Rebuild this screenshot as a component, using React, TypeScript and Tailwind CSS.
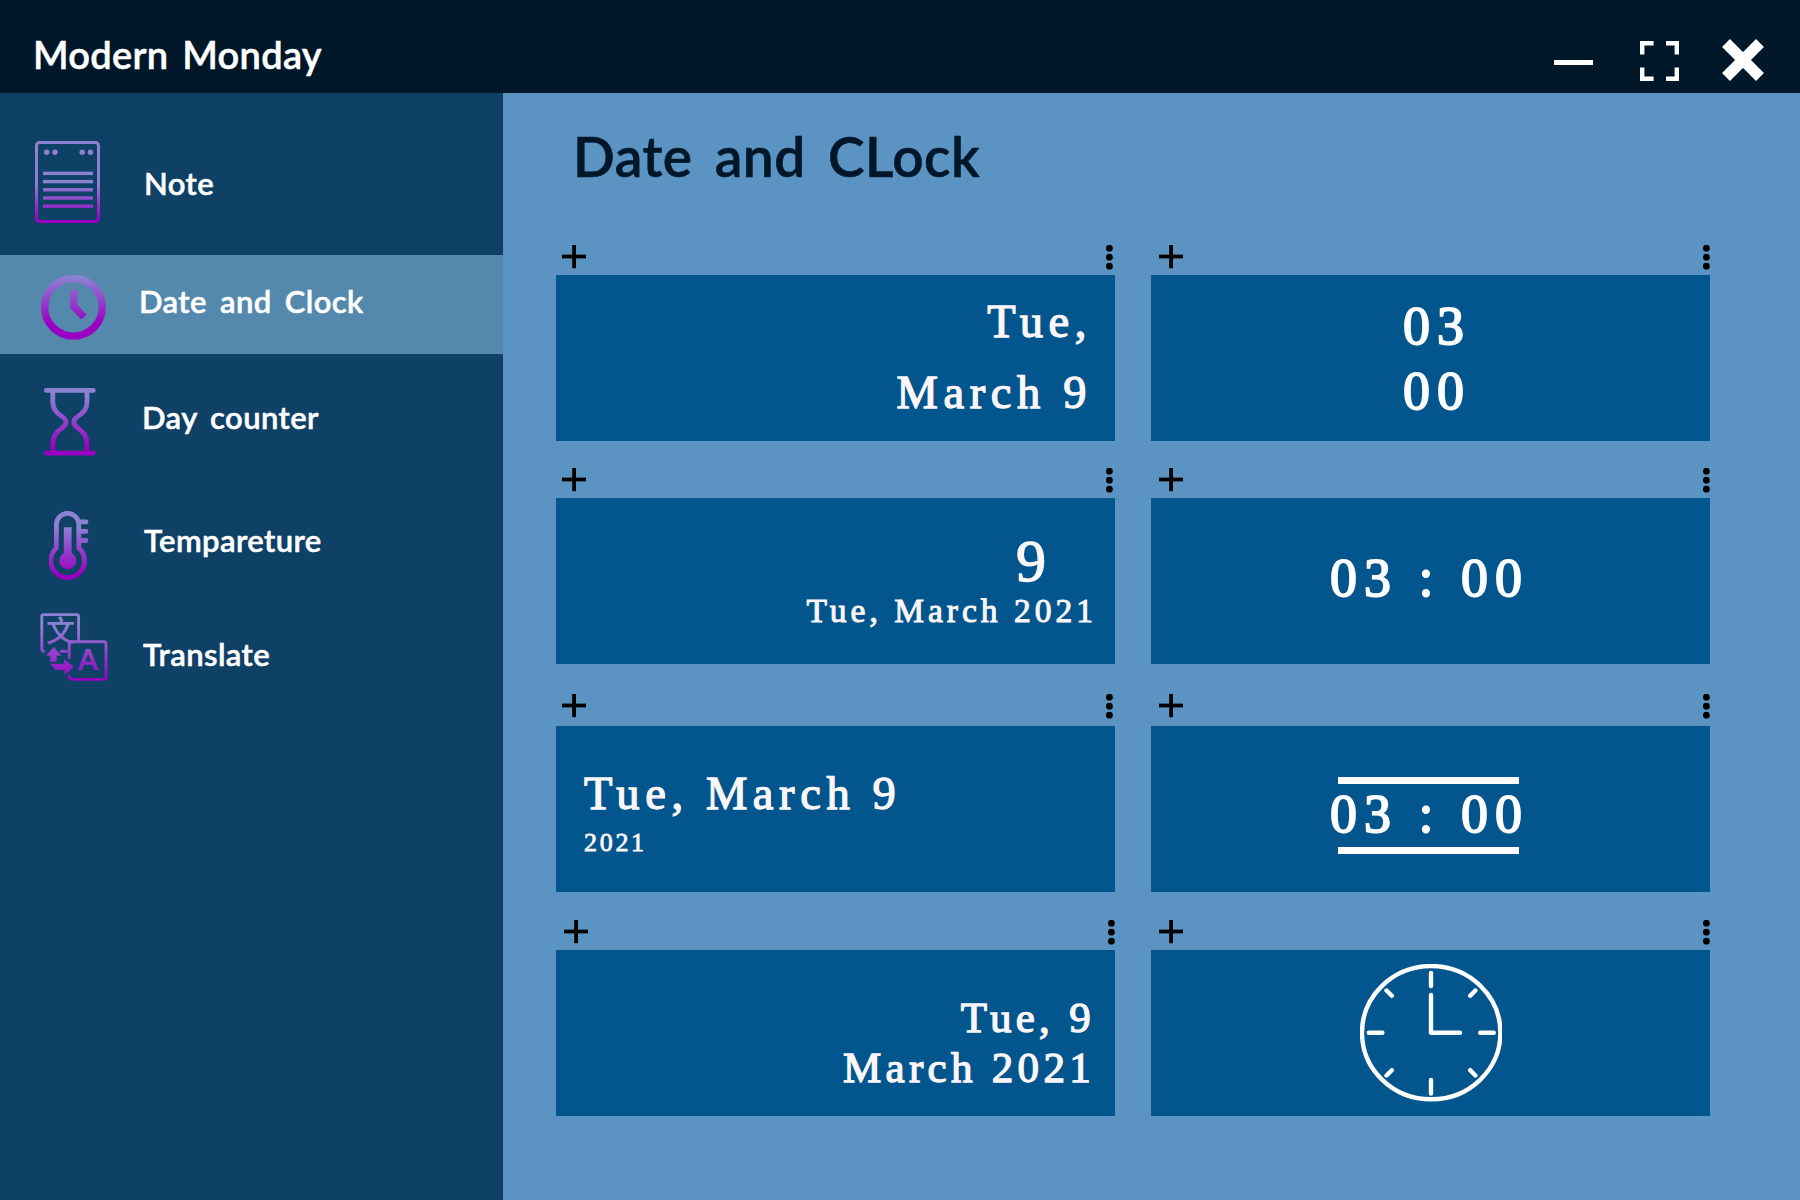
import React from 'react';

type FadeProps = { id: string; y2: number; from: string; to: string };

function Fade({ id, y2, from, to }: FadeProps) {
  return (
    <defs>
      <linearGradient id={id} gradientUnits="userSpaceOnUse" x1="0" y1="0" x2="0" y2={y2}>
        <stop offset={from} stopColor="#8c82d2" />
        <stop offset={to} stopColor="#9a00c2" />
      </linearGradient>
    </defs>
  );
}

function NoteIcon() {
  return (
    <svg width="65" height="82" viewBox="0 0 65 82" fill="none">
      <Fade id="note" y2={82} from="52%" to="96%" />
      <rect x="1.5" y="1.5" width="62" height="79" rx="3" stroke="url(#note)" strokeWidth="3" />
      <g fill="url(#note)">
        <circle cx="11.7" cy="11.2" r="2.7" />
        <circle cx="20" cy="11.2" r="2.7" />
        <circle cx="47.2" cy="11.2" r="2.7" />
        <circle cx="55.4" cy="11.2" r="2.7" />
        <rect x="8" y="30.7" width="50" height="3.4" />
        <rect x="8" y="38.9" width="50" height="3.4" />
        <rect x="8" y="47.1" width="50" height="3.4" />
        <rect x="8" y="55.3" width="50" height="3.4" />
        <rect x="8" y="63.5" width="50" height="3.4" />
      </g>
    </svg>
  );
}

function ClockIcon() {
  return (
    <svg width="65" height="65" viewBox="0 0 65 65" fill="none">
      <Fade id="clock" y2={65} from="4%" to="75%" />
      <circle cx="32.5" cy="32.3" r="28.8" stroke="url(#clock)" strokeWidth="7.4" />
      <path d="M32.8 15V31.5L43 42" stroke="url(#clock)" strokeWidth="7.4" />
    </svg>
  );
}

function HourglassIcon() {
  return (
    <svg width="52" height="68" viewBox="0 0 52 68" fill="none">
      <Fade id="hour" y2={68} from="12%" to="88%" />
      <g stroke="url(#hour)" strokeWidth="4.8">
        <path d="M8.8 4V14C8.8 21 13 25.5 18 28.5Q22 31 22 34Q22 37 18 40C13 43.5 8.8 48 8.8 55V64" />
        <path d="M43 4V14C43 21 38.8 25.5 33.8 28.5Q29.8 31 29.8 34Q29.8 37 33.8 40C38.8 43.5 43 48 43 55V64" />
      </g>
      <rect x="0" y="0" width="51.6" height="4.8" rx="2" fill="url(#hour)" />
      <rect x="0" y="62.8" width="51.6" height="4.8" rx="2" fill="url(#hour)" />
    </svg>
  );
}

function ThermometerIcon() {
  return (
    <svg width="40" height="69" viewBox="0 0 40 69" fill="none">
      <Fade id="thermo" y2={69} from="22%" to="92%" />
      <path
        d="M7.4 37V13.5A11.2 11.2 0 0 1 29.8 13.5V37A16.9 16.9 0 1 1 7.4 37Z"
        stroke="url(#thermo)"
        strokeWidth="4.8"
      />
      <path d="M14.8 16.3H22.6V42.2A8.5 8.5 0 1 1 14.8 42.2Z" fill="url(#thermo)" />
      <g fill="url(#thermo)">
        <rect x="30" y="8.4" width="9.2" height="4.8" rx="1.8" />
        <rect x="30" y="17.9" width="9.2" height="4.8" rx="1.8" />
        <rect x="30" y="27.1" width="9.2" height="4.8" rx="1.8" />
      </g>
    </svg>
  );
}

function TranslateIcon() {
  return (
    <svg className="overflow-visible" width="68" height="69" viewBox="0 0 68 69" fill="none">
      <Fade id="trans" y2={69} from="20%" to="96%" />
      <g stroke="url(#trans)" strokeWidth="2.9" strokeLinejoin="round">
        <path d="M38.6 27.5V3.4Q38.6 1.6 36.8 1.6H3.6Q1.8 1.6 1.8 3.4V36.2Q1.8 38.3 4.8 38.3" />
        <path d="M20 38.3H27.5" />
        <path d="M29.2 46V31Q29.2 28.8 31.4 28.8H63.8Q66 28.8 66 31V64.2Q66 66.4 63.8 66.4H32Q29.4 66.4 29.2 62" />
      </g>
      <g fill="url(#trans)">
        <path d="M13.7 34L21.4 42.7H16.7V48.7H10.3V42.7H6Z" />
        <path d="M10.3 50.7H24.4V46L33.7 54L24.4 62V57H15.5Z" />
        <text x="6" y="29.2" fontSize="29" fontWeight="500" fontFamily="Noto Sans CJK SC, sans-serif">文</text>
        <text x="38" y="57.3" fontSize="29" fontWeight="600" fontFamily="Lato, sans-serif" stroke="url(#trans)" strokeWidth="0.6">A</text>
      </g>
    </svg>
  );
}

function WindowButtons() {
  return (
    <div className="flex pr-[36px] pt-[39px] text-white">
      <svg className="mt-[21px]" width="39" height="5" viewBox="0 0 39 5">
        <rect width="39" height="5" fill="currentColor" />
      </svg>
      <svg className="ml-[47px] mt-[2px]" width="39" height="40" viewBox="0 0 39 40" fill="none" stroke="currentColor" strokeWidth="4.4">
        <path d="M2.2 13.4V2.2H13.6M26 2.2H36.8V13.4M36.8 26.4V37.8H26M13.6 37.8H2.2V26.4" />
      </svg>
      <svg className="ml-[43.5px]" width="42" height="42" viewBox="0 0 42 42" fill="none" stroke="currentColor" strokeWidth="11.2">
        <path d="M4 4L38 38M38 4L4 38" />
      </svg>
    </div>
  );
}

function PlusIcon() {
  return (
    <svg width="24" height="24" viewBox="0 0 24 24" fill="#000">
      <rect x="10.2" y="0" width="3.8" height="23.2" />
      <rect x="0" y="9.6" width="24" height="3.8" />
    </svg>
  );
}

function DotsIcon() {
  return (
    <svg width="8" height="25" viewBox="0 0 8 25" fill="#000">
      <circle cx="4.4" cy="3.2" r="3.4" />
      <circle cx="4.4" cy="12.2" r="3.4" />
      <circle cx="4.4" cy="21.2" r="3.4" />
    </svg>
  );
}

function AnalogClock() {
  return (
    <svg width="142" height="138" viewBox="0 0 142 138" fill="none" stroke="#fff" strokeWidth="4.4" strokeLinecap="round">
      <ellipse cx="71.2" cy="68.7" rx="69.2" ry="66.6" />
      <path d="M71 9V22M71 116V129.5M8.8 68.8H22.4M120.2 68.8H133.8" />
      <path d="M26.5 26.5L31.8 31.8M115.4 26.5L110.2 31.8M26.5 111.5L31.8 106.2M115.4 111.5L110.2 106.2" />
      <path d="M71 31V68.8H100" strokeLinejoin="round" />
    </svg>
  );
}

type NavProps = { icon: React.ReactNode; label: string; row: string; iconPos: string; labelPos: string };

function NavItem({ icon, label, row, iconPos, labelPos }: NavProps) {
  return (
    <a className={`flex items-start ${row}`}>
      <span className={`w-[68px] shrink-0 ${iconPos}`}>{icon}</span>
      <span
        className={`whitespace-nowrap text-[31px] leading-[40px] font-semibold tracking-[0.4px] text-white [word-spacing:5px] [-webkit-text-stroke:0.5px_currentColor] ${labelPos}`}
      >
        {label}
      </span>
    </a>
  );
}

type CardProps = { bar: string; body: string; children: React.ReactNode };

function Card({ bar, body, children }: CardProps) {
  return (
    <section className="w-[559px]">
      <div className={`flex items-start justify-between ${bar}`}>
        <PlusIcon />
        <DotsIcon />
      </div>
      <div className={`flex h-[166px] flex-col bg-[#02558d] whitespace-pre ${body}`}>{children}</div>
    </section>
  );
}

export default function App() {
  return (
    <div className="flex h-[1200px] w-[1800px] flex-col overflow-hidden bg-[#5b94c3] font-['Lato',sans-serif]">
      <header className="flex h-[93px] shrink-0 items-start justify-between bg-[#00172a]">
        <h1 className="ml-[33px] mt-[29px] whitespace-nowrap text-[38px] leading-[50px] font-semibold tracking-[0.3px] text-white [word-spacing:4px] [-webkit-text-stroke:0.5px_currentColor]">
          Modern Monday
        </h1>
        <WindowButtons />
      </header>
      <div className="flex min-h-0 flex-1">
        <nav className="flex w-[503px] shrink-0 flex-col bg-[#0f4066]">
          <NavItem icon={<NoteIcon />} label="Note" row="h-[162px]" iconPos="ml-[35px] mt-[48px]" labelPos="ml-[41px] mt-[70px]" />
          <NavItem icon={<ClockIcon />} label="Date and Clock" row="h-[99px] bg-[#5588ad]" iconPos="ml-[41px] mt-[20px]" labelPos="ml-[30px] mt-[26px]" />
          <NavItem icon={<HourglassIcon />} label="Day counter" row="h-[126px]" iconPos="ml-[43.7px] mt-[34px]" labelPos="ml-[30.3px] mt-[43px]" />
          <NavItem icon={<ThermometerIcon />} label="Tempareture" row="h-[120px]" iconPos="ml-[48.7px] mt-[31px]" labelPos="ml-[27.3px] mt-[40px]" />
          <NavItem icon={<TranslateIcon />} label="Translate" row="h-[100px]" iconPos="ml-[40px] mt-[13px]" labelPos="ml-[35px] mt-[34px]" />
        </nav>
        <main className="flex-1 pl-[53px]">
          <h2 className="ml-[17px] mt-[28px] w-max whitespace-nowrap text-[55px] leading-[70px] font-semibold tracking-[0.5px] text-[#00172a] [word-spacing:8px] [-webkit-text-stroke:0.6px_currentColor]">
            Date and CLock
          </h2>
          <div className="mt-[54px] grid w-max grid-cols-[559px_559px] gap-x-[36px] font-['Liberation_Serif',serif] text-[#fbf6f7] [-webkit-text-stroke:1.3px_currentColor]">
            <Card bar="h-[30px] pl-[6px] pr-[2px]" body="items-end pr-[23px]">
              <p className="mt-[23px] text-[46.5px] leading-[47px] tracking-[5.6px]">Tue,</p>
              <p className="mt-[24px] text-[46.5px] leading-[47px] tracking-[5.6px]">March 9</p>
            </Card>
            <Card bar="h-[30px] pl-[8px]" body="items-start pl-[252px] text-white [-webkit-text-stroke:1.8px_currentColor]">
              <p className="mt-[24px] text-[54px] leading-[54px] tracking-[7px]">03</p>
              <p className="mt-[11px] text-[54px] leading-[54px] tracking-[7px]">00</p>
            </Card>

            <Card bar="mt-[27px] h-[30px] pl-[6px] pr-[2px]" body="items-end pr-[18px]">
              <p className="mr-[51px] mt-[33px] text-[60px] leading-[60px]">9</p>
              <p className="mt-[3px] text-[33.5px] leading-[34px] tracking-[4px] [-webkit-text-stroke:1px_currentColor]">Tue, March 2021</p>
            </Card>
            <Card bar="mt-[27px] h-[30px] pl-[8px]" body="items-start pl-[179px] text-white [-webkit-text-stroke:1.8px_currentColor]">
              <p className="mt-[53px] text-[54px] leading-[54px] tracking-[7px]">03 : 00</p>
            </Card>

            <Card bar="mt-[30px] h-[32px] pl-[6px] pr-[2px]" body="items-start pl-[28px]">
              <p className="mt-[44px] text-[46.5px] leading-[47px] tracking-[5.6px]">Tue, March 9</p>
              <p className="mt-[13px] text-[26px] leading-[26px] tracking-[2.7px] [-webkit-text-stroke:0.8px_currentColor]">2021</p>
            </Card>
            <Card bar="mt-[30px] h-[32px] pl-[8px]" body="items-start pl-[179px] text-white [-webkit-text-stroke:1.8px_currentColor]">
              <div className="ml-[8px] mt-[51px] h-[7px] w-[181px] bg-white" />
              <p className="mt-[3px] text-[54px] leading-[54px] tracking-[7px]">03 : 00</p>
              <div className="ml-[8px] mt-[6px] h-[7px] w-[181px] bg-white" />
            </Card>

            <Card bar="mt-[28px] h-[30px] pl-[8px]" body="items-end pr-[20px]">
              <p className="mt-[46px] text-[43px] leading-[43px] tracking-[4.3px]">Tue, 9</p>
              <p className="mt-[7px] text-[43px] leading-[43px] tracking-[4.3px]">March 2021</p>
            </Card>
            <Card bar="mt-[28px] h-[30px] pl-[8px]" body="items-start pl-[209px] pt-[14px]">
              <AnalogClock />
            </Card>
          </div>
        </main>
      </div>
    </div>
  );
}
